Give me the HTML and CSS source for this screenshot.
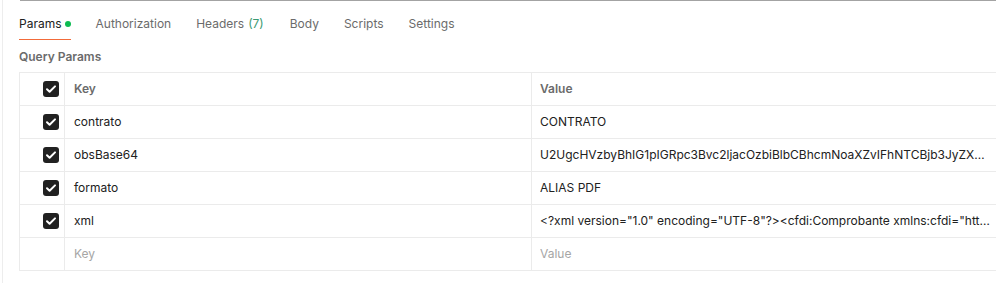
FILE: index.html
```html
<!DOCTYPE html>
<html lang="en">
<head>
    <meta charset="UTF-8">
    <meta name="viewport" content="width=device-width, initial-scale=1.0">
    <title>Params</title>
    <link rel="stylesheet" href="styles.css">
</head>
<body>
    <div class="pane">
        <div class="tabs">
            <div class="tab active">Params <span class="dot"></span></div>
            <div class="tab">Authorization</div>
            <div class="tab tab-headers">Headers <span class="count">(7)</span></div>
            <div class="tab">Body</div>
            <div class="tab">Scripts</div>
            <div class="tab">Settings</div>
        </div>

        <div class="section-title">Query Params</div>

        <table class="params">
            <colgroup>
                <col class="col-check">
                <col class="col-key">
                <col class="col-value">
            </colgroup>
            <thead>
                <tr>
                    <td class="check"><span class="box"><svg viewBox="0 0 16 16"><path d="M4 8.3l2.6 2.5L12 5.4"/></svg></span></td>
                    <th>Key</th>
                    <th>Value</th>
                </tr>
            </thead>
            <tbody>
                <tr>
                    <td class="check"><span class="box"><svg viewBox="0 0 16 16"><path d="M4 8.3l2.6 2.5L12 5.4"/></svg></span></td>
                    <td>contrato</td>
                    <td><div class="cell-text">CONTRATO</div></td>
                </tr>
                <tr>
                    <td class="check"><span class="box"><svg viewBox="0 0 16 16"><path d="M4 8.3l2.6 2.5L12 5.4"/></svg></span></td>
                    <td>obsBase64</td>
                    <td><div class="cell-text">U2UgcHVzbyBhIG1pIGRpc3Bvc2ljacOzbiBlbCBhcmNoaXZvIFhNTCBjb3JyZXNwb25kaWVudGUgYWwgY29udHJhdG8=</div></td>
                </tr>
                <tr>
                    <td class="check"><span class="box"><svg viewBox="0 0 16 16"><path d="M4 8.3l2.6 2.5L12 5.4"/></svg></span></td>
                    <td>formato</td>
                    <td><div class="cell-text">ALIAS PDF</div></td>
                </tr>
                <tr>
                    <td class="check"><span class="box"><svg viewBox="0 0 16 16"><path d="M4 8.3l2.6 2.5L12 5.4"/></svg></span></td>
                    <td>xml</td>
                    <td><div class="cell-text">&lt;?xml version="1.0" encoding="UTF-8"?&gt;&lt;cfdi:Comprobante xmlns:cfdi="http://www.sat.gob.mx/cfd/4" xmlns:xsi="http://www.w3.org/2001/XMLSchema-instance"&gt;</div></td>
                </tr>
                <tr>
                    <td class="check"></td>
                    <td class="placeholder">Key</td>
                    <td><div class="cell-text placeholder">Value</div></td>
                </tr>
            </tbody>
        </table>
    </div>
</body>
</html>
```

FILE: styles.css
```css
html, body {
    margin: 0;
    padding: 0;
    background-color: white;
    overflow: hidden;
}
body {
    font-family: Inter, "Open Sans", sans-serif;
    color: #212121;
    width: 996px;
    height: 283px;
}
.pane {
    margin-left: 2px;
    border-left: 1px solid #ededed;
    height: 283px;
    padding-left: 16px;
    box-sizing: border-box;
}
.tabs {
    display: flex;
    gap: 26px;
    border-top: 1px solid #a3a3a3;
    margin-left: 1px;
}
.tab {
    font-size: 12px;
    line-height: 16px;
    padding: 15px 0 7px;
    color: #6b6b6b;
    border-bottom: 1px solid transparent;
    display: flex;
    align-items: center;
    margin-left: -1px;
}
.tab.active {
    color: #212121;
    border-bottom-color: #f26b3a;
}
.tab-headers {
    margin-right: 1px;
}
.dot {
    display: inline-block;
    width: 6px;
    height: 6px;
    border-radius: 50%;
    background-color: #0cbb52;
    margin-left: 3px;
}
.count {
    color: #3a9a72;
    margin-left: 4px;
}
.section-title {
    font-size: 12px;
    line-height: 16px;
    font-weight: 600;
    color: #6b6b6b;
    margin-top: 9px;
    margin-bottom: 7px;
}
.params {
    border-collapse: collapse;
    table-layout: fixed;
    width: 990px;
    font-size: 12px;
}
.col-check {
    width: 45px;
}
.col-key {
    width: 467px;
}
.params td,
.params th {
    border: 1px solid #ebebeb;
    height: 33px;
    padding: 0 0 0 9px;
    text-align: left;
    vertical-align: middle;
    line-height: 16px;
    box-sizing: border-box;
}
.params th {
    font-weight: 600;
    color: #6b6b6b;
}
.params th:last-child,
.params td:last-child {
    padding-left: 8px;
    padding-right: 0;
}
.params td.check {
    padding: 0 5px 0 0;
    text-align: right;
}
.box {
    display: inline-block;
    width: 16px;
    height: 16px;
    border-radius: 3px;
    background-color: #212121;
    vertical-align: middle;
}
.box svg {
    display: block;
    width: 16px;
    height: 16px;
    fill: none;
    stroke: white;
    stroke-width: 2;
    stroke-linecap: round;
    stroke-linejoin: round;
}
.cell-text {
    width: 453px;
    white-space: nowrap;
    overflow: hidden;
    text-overflow: ellipsis;
}
.placeholder {
    color: #a6a6a6;
}
```
